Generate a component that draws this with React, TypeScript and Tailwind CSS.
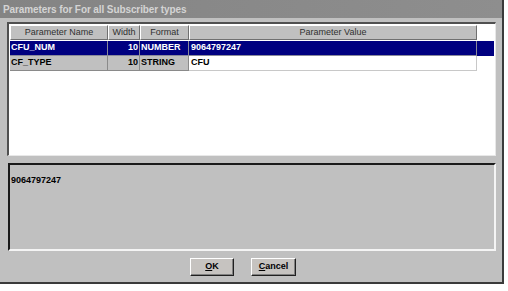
import React from 'react';

const cols = [
  { key: 'name', label: 'Parameter Name', w: 'w-[98px]' },
  { key: 'width', label: 'Width', w: 'w-[32px]' },
  { key: 'format', label: 'Format', w: 'w-[49px]' },
  { key: 'value', label: 'Parameter Value', w: 'w-[288px]' },
];

const rows = [
  { name: 'CFU_NUM', width: '10', format: 'NUMBER', value: '9064797247' },
  { name: 'CF_TYPE', width: '10', format: 'STRING', value: 'CFU' },
];

const Button: React.FC<{ mnemonic: string; rest: string; w: string }> = ({ mnemonic, rest, w }) => (
  <button
    className={`${w} h-[18px] bg-[#c6c3c0] border border-t-white border-l-white border-r-[#202020] border-b-[#202020] shadow-[inset_-1px_-1px_0_#808080] flex items-center justify-center text-[9px] font-bold text-black`}
  >
    <span className="underline">{mnemonic}</span>
    {rest}
  </button>
);

export default function App() {
  const selected = 0;

  return (
    <div className="w-[508px] h-[291px] bg-white font-['Liberation_Sans',Arial,sans-serif]">
      <div className="w-[504px] h-[284px] bg-[#c0c0c0] border-r-2 border-b-2 border-r-[#3a3a3a] border-b-[#3a3a3a] flex flex-col">
        {/* title bar */}
        <div className="h-[18px] bg-gradient-to-r from-[#848484] to-[#8e8e8e] flex items-center px-[3px]">
          <span className="text-[10px] font-bold text-[#d4d4d4] tracking-[-0.1px]">
            Parameters for For all Subscriber types
          </span>
        </div>

        {/* parameter grid */}
        <div className="ml-[7px] mr-[6px] mt-[4px] h-[134px] bg-white border-t-2 border-l-2 border-t-[#505050] border-l-[#505050] border-r border-b border-r-[#e8e8e8] border-b-[#e8e8e8] flex flex-col">
          <div className="flex h-[15px] w-[467px] ml-[1px] mt-[1px]">
            {cols.map((c) => (
              <div
                key={c.key}
                className={`${c.w} bg-[#c0c0c0] border-t border-l border-t-white border-l-white border-r border-b border-r-[#707070] border-b-[#707070] flex items-center justify-center text-[9px] text-[#303030]`}
              >
                {c.label}
              </div>
            ))}
          </div>
          {rows.map((r, i) => {
            const sel = i === selected;
            return (
              <div
                key={r.name}
                className={`flex h-[15px] ml-[1px] ${sel ? 'w-[484px] bg-[#000080] mt-[1px]' : 'w-[467px]'}`}
              >
                <div className={`w-[98px] border-r border-b ${sel ? 'border-[#8a8a9a] text-white' : 'bg-[#c0c0c0] border-[#8a8a8a] text-black'} flex items-center pl-[1px] text-[9px] font-bold`}>
                  {r.name}
                </div>
                <div className={`w-[32px] border-r border-b ${sel ? 'border-[#8a8a9a] text-white' : 'bg-[#c0c0c0] border-[#8a8a8a] text-black'} flex items-center justify-end pr-[1px] text-[9px] font-bold`}>
                  {r.width}
                </div>
                <div className={`w-[49px] border-r border-b ${sel ? 'border-[#8a8a9a] text-white' : 'bg-[#c0c0c0] border-[#8a8a8a] text-black'} flex items-center pl-[1px] text-[9px] font-bold`}>
                  {r.format}
                </div>
                <div className={`w-[288px] border-r border-b ${sel ? 'border-[#8a8a9a] text-white' : 'bg-white border-[#c8c8c8] text-black'} flex items-center pl-[2px] text-[9px] font-bold`}>
                  {r.value}
                </div>
              </div>
            );
          })}
        </div>

        {/* value detail */}
        <div className="ml-[8px] mr-[6px] mt-[7px] h-[88px] bg-[#c0c0c0] border-t-2 border-l-2 border-t-[#1a1a1a] border-l-[#1a1a1a] border-r-2 border-b-2 border-r-[#f4f4f4] border-b-[#f4f4f4] px-[1px] pt-[1px]">
          <span className="text-[9px] font-bold text-black">{rows[selected].value}</span>
        </div>

        {/* actions */}
        <div className="flex justify-center gap-[17px] mt-[7px] pr-[16px]">
          <Button mnemonic="O" rest="K" w="w-[44px]" />
          <Button mnemonic="C" rest="ancel" w="w-[45px]" />
        </div>
      </div>
    </div>
  );
}
